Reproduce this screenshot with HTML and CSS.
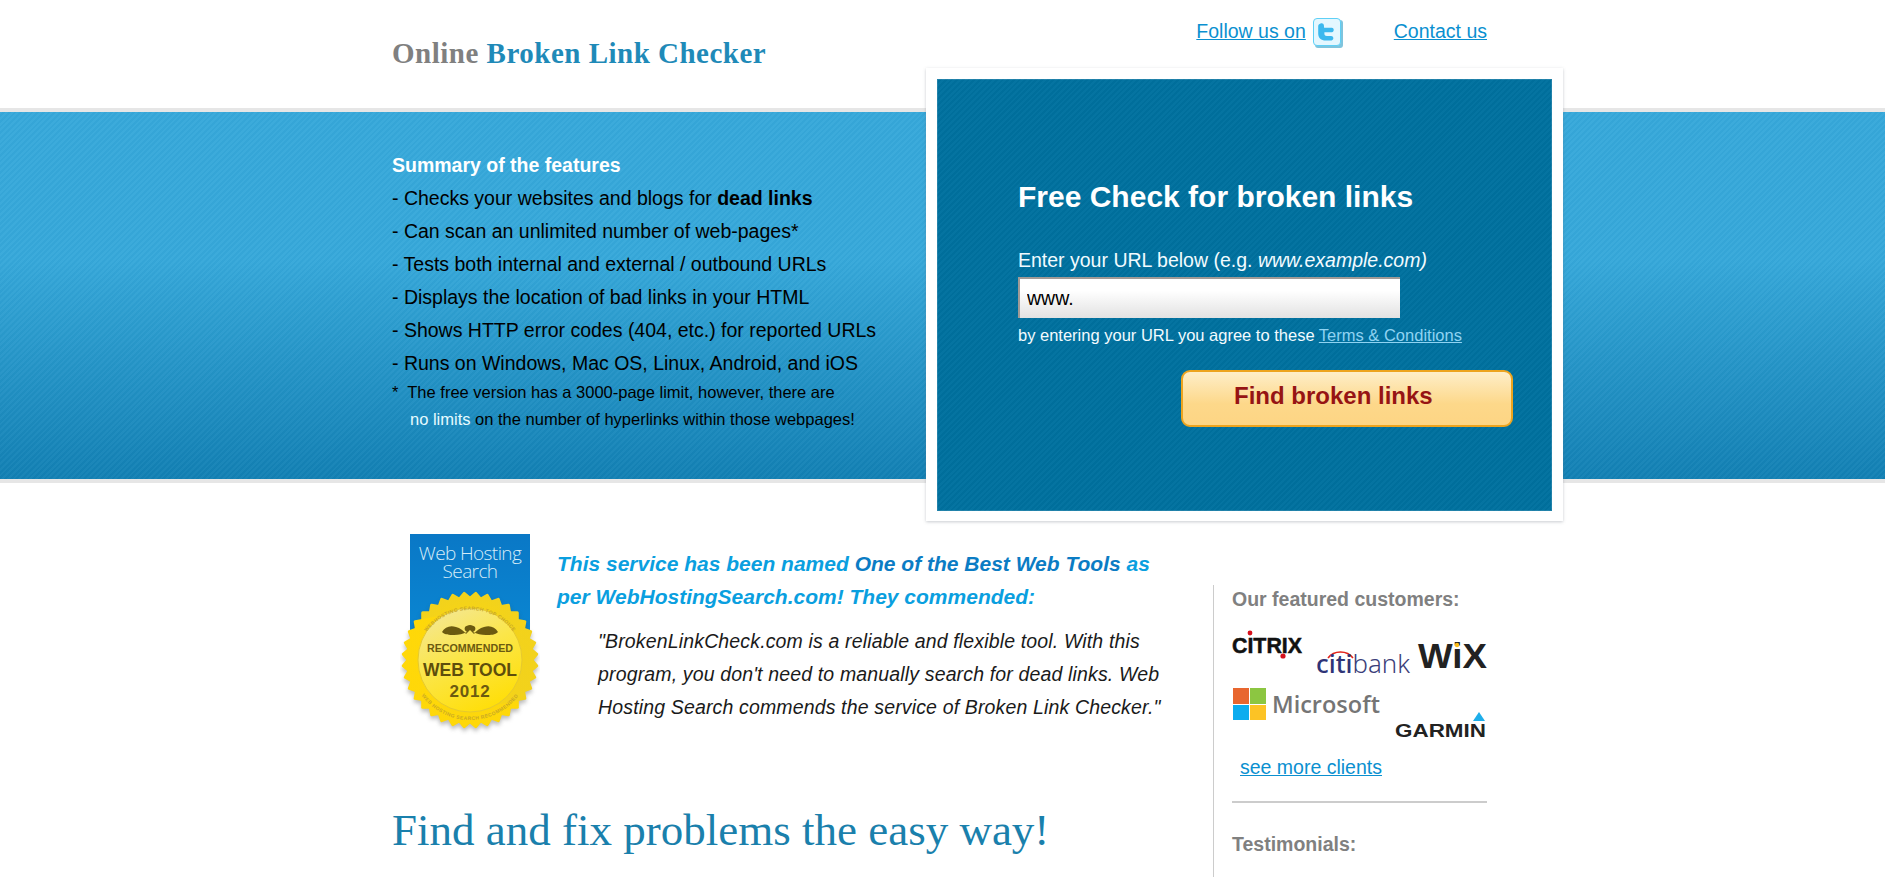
FILE: index.html
```html
<!DOCTYPE html>
<html lang="en">
<head>
<meta charset="utf-8">
<title>Online Broken Link Checker</title>
<link rel="stylesheet" href="styles.css">
</head>
<body>
<div class="page">
  <header class="header">
    <div class="wrap header-row">
      <h1 class="title"><span class="title-gray">Online</span> Broken Link Checker</h1>
      <nav class="top-nav">
        <a href="#" class="top-link">Follow us on</a>
        <svg class="tw-icon" viewBox="0 0 30 30" aria-label="Twitter">
          <rect x="2" y="2" width="28" height="28" rx="3" fill="#7fc4dd"/>
          <rect x="0.5" y="0.5" width="27" height="27" rx="3.5" fill="#e4f7ff" stroke="#5fd0f6"/>
          <path d="M7.5 5.5c1.8-.7 3.2.2 3.4 1.8l.2 2.4h7.6c1.7 0 2.4 1.6 1.9 3-.4 1-1.4 1.5-2.6 1.5h-6.6v1.6c0 1.6 1 2.2 2.4 2.2h4.2c1.7 0 2.6 1.3 2.3 2.7-.3 1.2-1.3 1.8-2.6 1.8h-5c-4.6 0-7.5-2.6-7.5-7V8.2c0-1.2.9-2.2 2.3-2.7z" fill="#3cb8ee"/>
        </svg>
        <a href="#" class="top-link contact">Contact us</a>
      </nav>
    </div>
  </header>

  <section class="band">
    <div class="wrap band-row">
      <div class="features">
        <p class="features-head">Summary of the features</p>
        <p class="feature">- Checks your websites and blogs for <b>dead links</b></p>
        <p class="feature">- Can scan an unlimited number of web-pages*</p>
        <p class="feature">- Tests both internal and external / outbound URLs</p>
        <p class="feature">- Displays the location of bad links in your HTML</p>
        <p class="feature">- Shows HTTP error codes (404, etc.) for reported URLs</p>
        <p class="feature">- Runs on Windows, Mac OS, Linux, Android, and iOS</p>
        <p class="note">*&nbsp; The free version has a 3000-page limit, however, there are</p>
        <p class="note note-indent"><span class="white">no limits</span> on the number of hyperlinks within those webpages!</p>
      </div>
      <div class="card">
        <form class="card-inner">
          <h2 class="card-title">Free Check for broken links</h2>
          <label class="url-label" for="url">Enter your URL below (e.g. <i>www.example.com)</i></label>
          <input id="url" class="url-input" type="text" value="www.">
          <p class="terms">by entering your URL you agree to these <a href="#">Terms &amp; Conditions</a></p>
          <div class="button-row"><button type="button" class="find-btn">Find broken links</button></div>
        </form>
      </div>
    </div>
  </section>

  <main class="wrap content">
    <div class="content-main">
      <div class="award">
        <svg class="badge" viewBox="0 0 140 204" aria-label="Recommended Web Tool 2012">
          <defs>
            <linearGradient id="blueFill" x1="0" y1="0" x2="0" y2="1">
              <stop offset="0" stop-color="#0a78c6"/>
              <stop offset="1" stop-color="#0a86d2"/>
            </linearGradient>
            <linearGradient id="sealEdge" x1="0" y1="0" x2="0" y2="1">
              <stop offset="0" stop-color="#f2d21c"/>
              <stop offset="1" stop-color="#ffd808"/>
            </linearGradient>
            <linearGradient id="sealFace" x1="0.2" y1="0" x2="0.7" y2="1">
              <stop offset="0" stop-color="#f4e794"/>
              <stop offset="0.45" stop-color="#fbe64a"/>
              <stop offset="1" stop-color="#ffde06"/>
            </linearGradient>
            <path id="ringTop" d="M 16 130 A 54 54 0 0 1 124 130"/>
            <path id="ringBottom" d="M 10 126 A 60 60 0 0 0 130 126"/>
          </defs>
          <rect x="10" y="0" width="120" height="100" fill="url(#blueFill)"/>
          <text x="70" y="26" class="b-wh">Web Hosting</text>
          <text x="70" y="44" class="b-wh">Search</text>
          <g class="seal-teeth" fill="url(#sealEdge)">
            <rect x="21.2" y="77.2" width="97.6" height="97.6" rx="1.5" transform="rotate(0 70 126)"/>
            <rect x="21.2" y="77.2" width="97.6" height="97.6" rx="1.5" transform="rotate(10 70 126)"/>
            <rect x="21.2" y="77.2" width="97.6" height="97.6" rx="1.5" transform="rotate(20 70 126)"/>
            <rect x="21.2" y="77.2" width="97.6" height="97.6" rx="1.5" transform="rotate(30 70 126)"/>
            <rect x="21.2" y="77.2" width="97.6" height="97.6" rx="1.5" transform="rotate(40 70 126)"/>
            <rect x="21.2" y="77.2" width="97.6" height="97.6" rx="1.5" transform="rotate(50 70 126)"/>
            <rect x="21.2" y="77.2" width="97.6" height="97.6" rx="1.5" transform="rotate(60 70 126)"/>
            <rect x="21.2" y="77.2" width="97.6" height="97.6" rx="1.5" transform="rotate(70 70 126)"/>
            <rect x="21.2" y="77.2" width="97.6" height="97.6" rx="1.5" transform="rotate(80 70 126)"/>
          </g>
          <circle cx="70" cy="126" r="52" fill="url(#sealFace)" stroke="#e6c92e" stroke-width="1"/>
          <text class="b-ring"><textPath href="#ringTop" startOffset="50%">WEBHOSTING SEARCH TOP CHOICE</textPath></text>
          <text class="b-ring"><textPath href="#ringBottom" startOffset="50%">WEB HOSTING SEARCH RECOMMENDED</textPath></text>
          <path d="M42 98c3-5 8-7 14-5 4 1 8 4 10 7l4-4 4 4c2-3 6-6 10-7 6-2 11 0 14 5-3 3-7 3-12 3-5 0-9-1-13-3 2-1 3-3 2-5-1-1-3-2-5-2s-4 1-5 2c-1 2 0 4 2 5-4 2-8 3-13 3-5 0-9 0-12-3z" fill="#6b5a10"/>
          <text x="70" y="118" class="b-rec">RECOMMENDED</text>
          <text x="70" y="142" class="b-tool">WEB TOOL</text>
          <text x="70" y="163" class="b-year">2012</text>
        </svg>
        <div class="award-text">
          <p class="award-head">This service has been named <span class="award-strong">One of the Best Web Tools</span> as per WebHostingSearch.com! They commended:</p>
          <p class="award-quote">"BrokenLinkCheck.com is a reliable and flexible tool. With this program, you don't need to manually search for dead links. Web Hosting Search commends the service of Broken Link Checker."</p>
        </div>
      </div>
      <h2 class="easy">Find and fix problems the easy way!</h2>
    </div>
    <aside class="sidebar">
      <h3 class="side-head">Our featured customers:</h3>
      <div class="logos">
        <svg class="logo logo-citrix" viewBox="0 0 76 32"><text x="0" y="23" class="citrix" textLength="70" lengthAdjust="spacingAndGlyphs">CITRIX</text><circle cx="18" cy="3" r="2.4" fill="#d6101c"/><circle cx="51" cy="26" r="2.6" fill="#d6101c"/></svg>
        <svg class="logo logo-citi" viewBox="0 0 96 30"><path d="M12 8C18 0 31 0 37 8" fill="none" stroke="#e2231a" stroke-width="1.6"/><text x="0" y="23" class="citi" textLength="94" lengthAdjust="spacingAndGlyphs">citi<tspan class="citi-light">bank</tspan></text></svg>
        <svg class="logo logo-wix" viewBox="0 0 72 32"><text x="0" y="28" class="wix" textLength="69" lengthAdjust="spacingAndGlyphs">WiX</text><circle cx="39" cy="5" r="2.2" fill="#fbbd18"/></svg>
        <svg class="logo logo-ms" viewBox="0 0 150 34">
          <rect x="1" y="1" width="16" height="16" fill="#e8662f"/><rect x="18" y="1" width="16" height="16" fill="#8cc641"/>
          <rect x="1" y="18" width="16" height="15" fill="#0cacef"/><rect x="18" y="18" width="16" height="15" fill="#fcc325"/>
          <text x="40" y="26" class="ms">Microsoft</text>
        </svg>
        <svg class="logo logo-garmin" viewBox="0 0 92 32"><polygon points="84,3 90,12 78,12" fill="#1eaeea"/><text x="0" y="28" class="garmin" textLength="91" lengthAdjust="spacingAndGlyphs">GARMIN</text></svg>
      </div>
      <a href="#" class="more-clients">see more clients</a>
      <hr class="side-rule">
      <h3 class="side-head testimonials">Testimonials:</h3>
    </aside>
  </main>
</div>
</body>
</html>
```
FILE: styles.css
```css
* { box-sizing: border-box; }
html, body { margin: 0; padding: 0; }
body { font-family: "Liberation Sans", Arial, sans-serif; color: #000; background: #fff; }
p, h1, h2, h3 { margin: 0; }
.page { height: 100vh; overflow: hidden; display: flex; flex-direction: column; }
.wrap { width: 1101px; margin: 0 auto; }

.header { height: 108px; flex: none; }
.header-row { display: flex; justify-content: space-between; align-items: flex-start; height: 100%; }
.title { font-family: "Liberation Serif", "Times New Roman", serif; font-size: 29px; font-weight: bold; color: #1f8ab8; margin-top: 36px; line-height: 34px; letter-spacing: 0.5px; }
.title-gray { color: #808080; }
.top-nav { display: flex; align-items: flex-start; padding-top: 17px; margin-right: 6px; }
.top-link { font-size: 19.5px; line-height: 28px; color: #0a90d0; text-decoration: underline; }
.tw-icon { width: 30px; height: 30px; margin: 1px 0 0 7px; flex: none; }
.contact { margin-left: 51px; }

.band {
  flex: none;
  height: 375px;
  border-top: 4px solid #e6e6e6;
  border-bottom: 4px solid #e6e6e6;
  background:
    repeating-linear-gradient(135deg, rgba(255,255,255,0.03) 0 2px, rgba(0,0,0,0.015) 2px 4px),
    linear-gradient(#36a8da 0, #36a8da 40%, #1280b4 100%);
}
.band-row { display: flex; height: 100%; }
.features { width: 534px; padding-top: 36px; flex: none; }
.features-head { font-size: 19.5px; font-weight: bold; color: #fff; line-height: 34px; }
.feature { font-size: 19.5px; line-height: 33px; }
.note { font-size: 16.5px; line-height: 26px; margin-top: -1px; }
.note-indent { padding-left: 18px; margin-top: 1px; }
.white { color: #e6fbff; }

.card {
  flex: none;
  width: 637px;
  height: 453px;
  margin-top: -44px;
  padding: 11px 11px 10px;
  background: #fff;
  box-shadow: 0 1px 3px rgba(100,110,120,0.35);
}
.card-inner {
  display: block;
  height: 100%;
  padding: 100px 34px 0 81px;
  color: #fff;
  background:
    repeating-linear-gradient(135deg, rgba(255,255,255,0.02) 0 2px, rgba(0,0,0,0.025) 2px 4px),
    #00719f;
  box-shadow: inset 0 0 0 1px rgba(255,255,255,0.12);
}
.card-title { font-size: 30px; line-height: 36px; font-weight: bold; }
.url-label { display: block; font-size: 19.5px; line-height: 28px; margin-top: 31px; color: #f2fbff; }
.url-input {
  display: block;
  width: 382px;
  height: 41px;
  margin-top: 3px;
  padding: 0 0 0 7px;
  border: 0;
  border-top: 2px solid #a09a96;
  border-left: 2px solid #a09a96;
  font: 19.5px "Liberation Sans", Arial, sans-serif;
  color: #000;
  background: linear-gradient(#ffffff 30%, #e2e2e2 100%);
}
.terms { font-size: 16.5px; line-height: 24px; margin-top: 5px; color: #f2fbff; }
.terms a { color: #8fd3f2; }
.button-row { display: flex; justify-content: flex-end; margin-top: 23px; margin-right: -1px; }
.find-btn {
  width: 332px;
  height: 57px;
  margin-right: 6px;
  padding: 0 0 5px 51px;
  border: 2px solid #eda41e;
  border-radius: 9px;
  font: bold 24px "Liberation Sans", Arial, sans-serif;
  text-align: left;
  color: #961414;
  background: linear-gradient(#feeec8 0, #fdd88a 60%, #fdd584 100%);
}

.content { flex: 1; display: flex; min-height: 0; }
.content-main { width: 821px; flex: none; }
.award { display: flex; padding-top: 51px; height: 320px; }
.badge { width: 140px; height: 204px; margin-left: 8px; flex: none; }
.seal-teeth { filter: drop-shadow(0 3px 2px rgba(60,60,60,0.35)); }
.award-text { margin-left: 17px; width: 600px; padding-top: 13px; }
.award-head { font-size: 21px; line-height: 33px; font-weight: bold; font-style: italic; color: #0a9fdf; width: 600px; }
.award-strong { color: #0b7cc4; }
.award-quote { font-size: 19.5px; line-height: 33px; font-style: italic; color: #1a1a1a; letter-spacing: 0.15px; margin: 12px 0 0 41px; width: 585px; }
.easy { font-family: "Liberation Serif", "Times New Roman", serif; font-size: 45px; font-weight: normal; line-height: 54px; color: #1a80ac; }

.sidebar { width: 275px; height: 400px; flex: none; margin-top: 102px; border-left: 1px solid #ccc; padding: 1px 0 0 18px; }
.side-head { font-size: 19.5px; font-weight: bold; line-height: 26px; color: #808080; }
.logos { position: relative; width: 256px; height: 126px; margin-top: 12px; }
.logo { position: absolute; overflow: visible; }
.logo-citrix { left: 0; top: 6px; width: 76px; height: 32px; }
.logo-citi { left: 84px; top: 26px; width: 96px; height: 30px; }
.logo-wix { left: 186px; top: 16px; width: 72px; height: 32px; }
.logo-ms { left: 0; top: 63px; width: 150px; height: 34px; }
.logo-garmin { left: 163px; top: 85px; width: 92px; height: 32px; }
.citrix { font: bold 22px "Liberation Sans", sans-serif; fill: #111; stroke: #111; stroke-width: 0.5px; }
.citi { font: 500 25.5px "Noto Sans", sans-serif; fill: #2f3477; }
.citi-light { font-weight: 300; fill: #3c3f7a; }
.wix { font: bold 35px "Liberation Sans", sans-serif; fill: #222; }
.ms { font: 600 23.5px "Open Sans", sans-serif; fill: #757575; }
.garmin { font: bold 18px "Liberation Sans", sans-serif; fill: #222; }
.more-clients { display: block; font-size: 19.5px; line-height: 26px; color: #0a90d0; margin: 4px 0 0 8px; }
.side-rule { border: 0; height: 2px; background: #ccc; margin: 21px 0 0; width: 255px; }
.testimonials { margin-top: 28px; }

.b-wh { font: 300 19px "Open Sans", sans-serif; fill: #d6ecf8; text-anchor: middle; letter-spacing: -0.6px; }
.b-ring { font: bold 5px "Liberation Sans", sans-serif; fill: #c9a826; text-anchor: middle; letter-spacing: 0.4px; }
.b-rec { font: bold 10.7px "Liberation Sans", sans-serif; fill: #6b5a10; text-anchor: middle; }
.b-tool { font: bold 17.5px "Liberation Sans", sans-serif; fill: #5e4e0c; text-anchor: middle; }
.b-year { font: bold 17px "Liberation Sans", sans-serif; fill: #6b5a10; text-anchor: middle; letter-spacing: 0.8px; }
```
